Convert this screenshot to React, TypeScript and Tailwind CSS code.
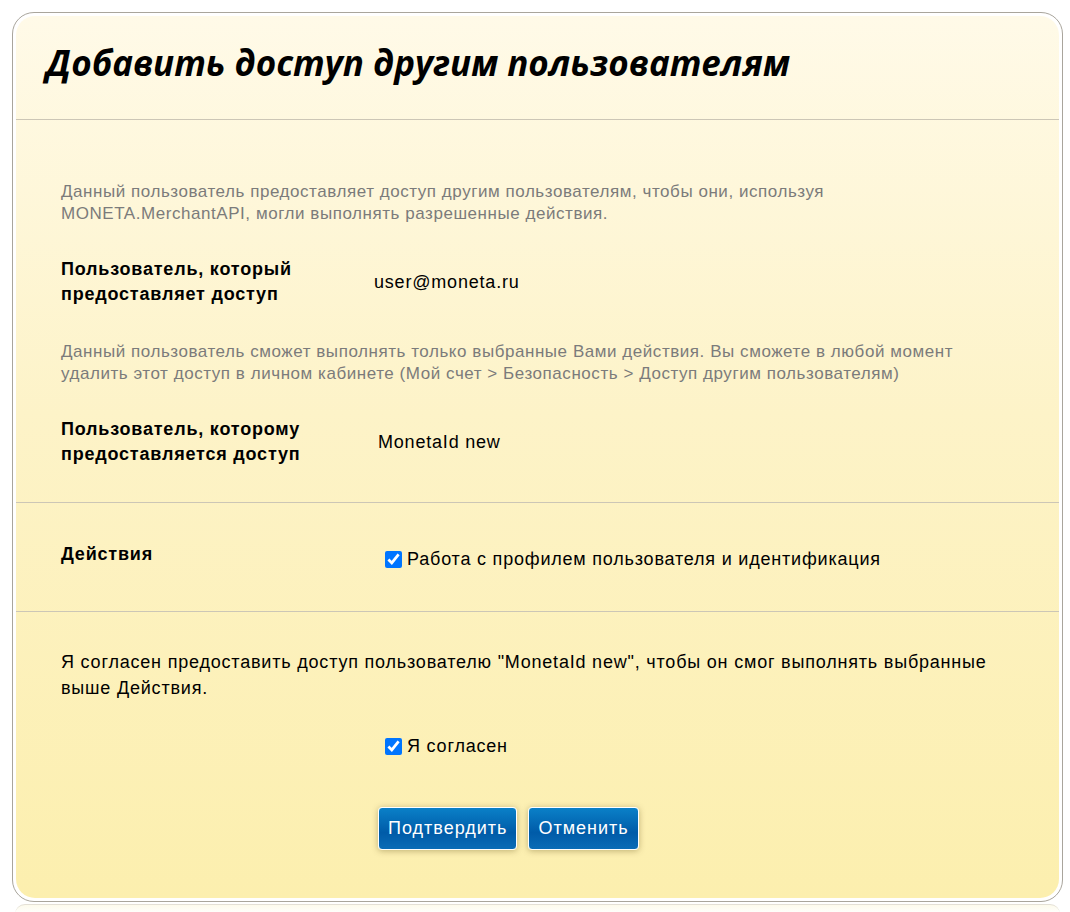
import React from 'react';

const sans = { fontFamily: '"Liberation Sans", Arial, sans-serif' };

const Row: React.FC<{ label: React.ReactNode; children: React.ReactNode; className?: string }> = ({ label, children, className }) => (
    <div className={`grid grid-cols-[313px_1fr] ${className ?? ''}`}>
        <div className="text-[18px] leading-[25px] tracking-[0.8px] font-bold text-black">{label}</div>
        <div className="text-[18px] leading-[25px] tracking-[0.8px] text-black">{children}</div>
    </div>
);

const Check: React.FC<{ label: string }> = ({ label }) => (
    <label className="flex items-center gap-[5px] text-[18px] leading-[24px] tracking-[0.8px] text-black">
        <input type="checkbox" defaultChecked className="w-[17px] h-[17px] m-0 accent-[#0075ff]" />
        <span>{label}</span>
    </label>
);

const Btn: React.FC<{ children: React.ReactNode }> = ({ children }) => (
    <button className="h-[43px] px-[9px] rounded-[4px] border border-white text-white text-[18px] tracking-[1px] bg-[linear-gradient(to_bottom,#0a80c8_0%,#005ba8_60%,#0a6cb6_100%)] shadow-[0_1px_6px_rgba(80,60,0,0.35)]">
        {children}
    </button>
);

export default function App() {
    return (
        <div className="min-h-[912px] bg-white pt-[12px] pl-[12px] pr-[7px]" style={sans}>
            <div className="w-[1051px] h-[890px] rounded-[22px] border border-[#a9a59c] bg-white p-[3px]">
                <div className="h-full rounded-[19px] bg-[linear-gradient(to_bottom,#fffae8_0%,#fdf3c8_45%,#fcefae_100%)] flex flex-col">
                    <div className="h-[104px] flex items-center pl-[30px] pb-[8px] border-b border-[#ccc6b6]">
                        <h1 className="text-[35px] font-bold italic text-black" style={{ fontFamily: '"Open Sans", "Noto Sans", sans-serif' }}>
                            Добавить доступ другим пользователям
                        </h1>
                    </div>

                    <div className="pl-[45px] pr-[20px] pt-[61px] pb-[35px] border-b border-[#ccc6b6]">
                        <p className="text-[17px] leading-[22px] tracking-[0.55px] text-[#7b7b7b]">
                            Данный пользователь предоставляет доступ другим пользователям, чтобы они, используя<br />
                            MONETA.MerchantAPI, могли выполнять разрешенные действия.
                        </p>
                        <Row label={<>Пользователь, который<br />предоставляет доступ</>} className="mt-[32px] items-center">
                            <span>user@moneta.ru</span>
                        </Row>
                        <p className="mt-[34px] text-[17px] leading-[22px] tracking-[0.55px] text-[#7b7b7b]">
                            Данный пользователь сможет выполнять только выбранные Вами действия. Вы сможете в любой момент<br />
                            удалить этот доступ в личном кабинете (Мой счет &gt; Безопасность &gt; Доступ другим пользователям)
                        </p>
                        <Row label={<>Пользователь, которому<br />предоставляется доступ</>} className="mt-[32px] items-center">
                            <span className="pl-[4px]">MonetaId new</span>
                        </Row>
                    </div>

                    <div className="pl-[45px] pr-[20px] h-[109px] pt-[4px] flex items-center border-b border-[#ccc6b6]">
                        <div className="grid grid-cols-[324px_1fr] w-full">
                            <div className="text-[18px] tracking-[0.8px] font-bold text-black -mt-[6px]">Действия</div>
                            <Check label="Работа с профилем пользователя и идентификация" />
                        </div>
                    </div>

                    <div className="pl-[45px] pr-[20px] pt-[37px]">
                        <p className="text-[18px] leading-[26px] tracking-[0.8px] text-black">
                            Я согласен предоставить доступ пользователю "MonetaId new", чтобы он смог выполнять выбранные<br />
                            выше Действия.
                        </p>
                        <div className="pl-[324px] mt-[33px]">
                            <Check label="Я согласен" />
                        </div>
                        <div className="pl-[317px] mt-[49px] flex gap-[11px]">
                            <Btn>Подтвердить</Btn>
                            <Btn>Отменить</Btn>
                        </div>
                    </div>
                </div>
            </div>
            <div className="w-[1045px] ml-[3px] mt-[2px] h-[10px] rounded-t-[22px] border-t border-[#e4e0d6] bg-[linear-gradient(to_bottom,#fdfbec,#ffffff)]" />
        </div>
    );
}
